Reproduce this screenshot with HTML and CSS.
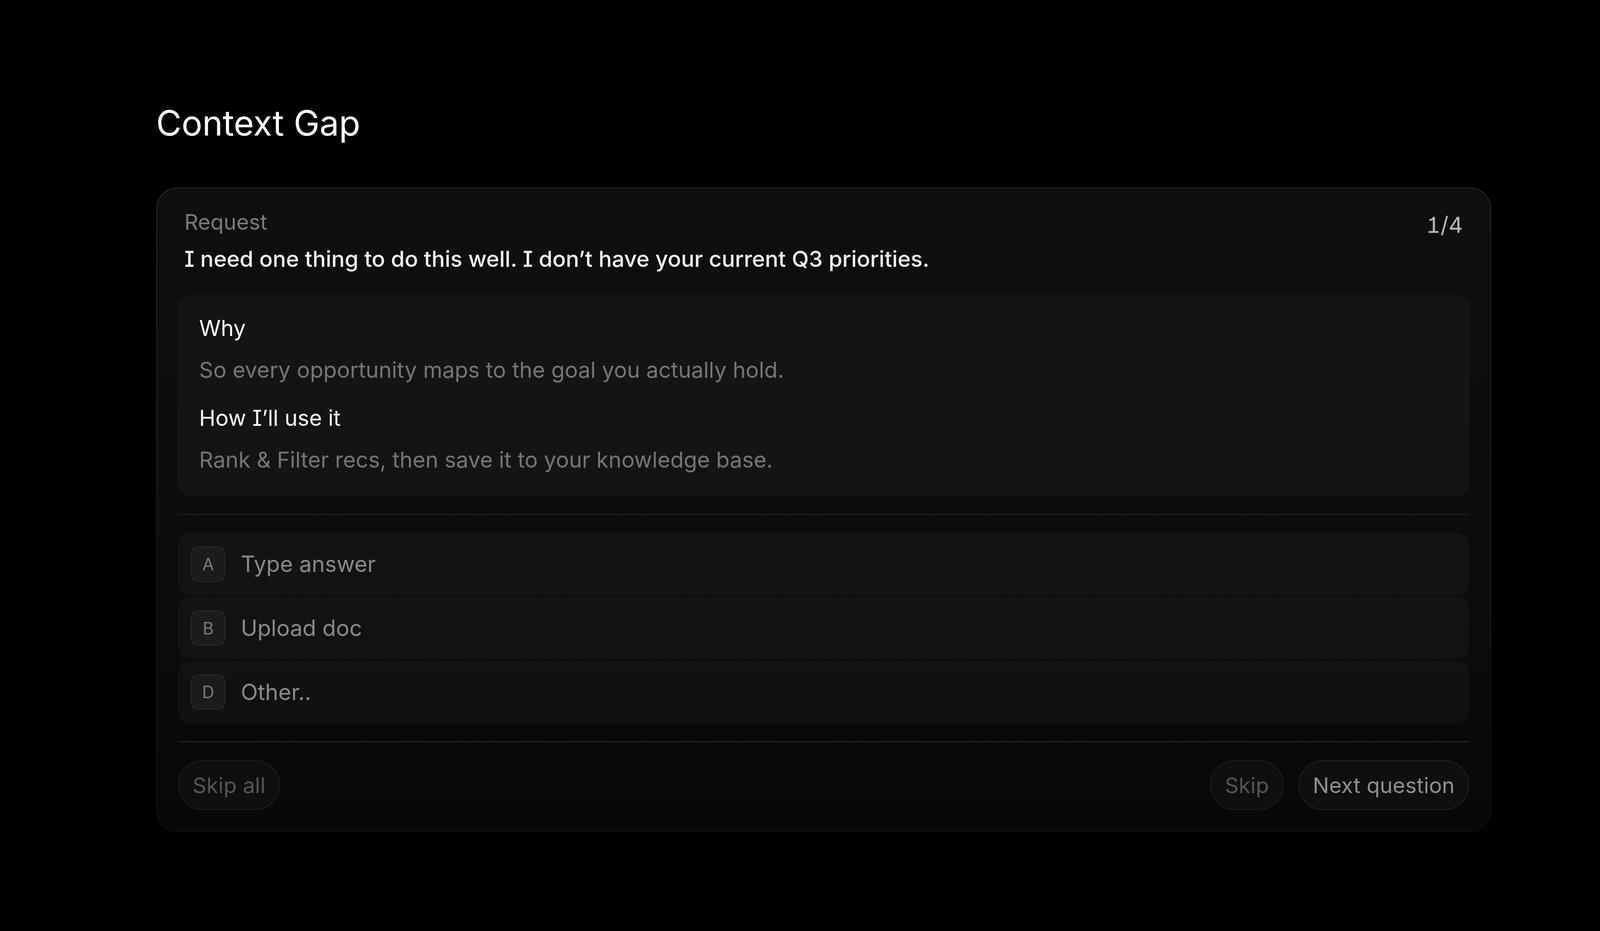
FILE: index.html
```html
<!DOCTYPE html>
<html lang="en">
<head>
<meta charset="utf-8">
<title>Context Gap</title>
<link rel="stylesheet" href="styles.css">
</head>
<body>
<div class="page">
  <h1 class="title">Context Gap</h1>
  <section class="card">
    <header class="head">
      <div class="head-text">
        <div class="label">Request</div>
        <p class="question">I need one thing to do this well. I don’t have your current Q3 priorities.</p>
      </div>
      <div class="count">1/4</div>
    </header>
    <div class="info">
      <div class="info-title">Why</div>
      <div class="info-desc">So every opportunity maps to the goal you actually hold.</div>
      <div class="info-title info-title-next">How I’ll use it</div>
      <div class="info-desc">Rank &amp; Filter recs, then save it to your knowledge base.</div>
    </div>
    <div class="divider"></div>
    <div class="options">
      <div class="option"><span class="key">A</span><span class="opt-text">Type answer</span></div>
      <div class="option"><span class="key">B</span><span class="opt-text">Upload doc</span></div>
      <div class="option"><span class="key">D</span><span class="opt-text">Other..</span></div>
    </div>
    <div class="divider"></div>
    <footer class="actions">
      <button class="btn btn-dim">Skip all</button>
      <div class="actions-right">
        <button class="btn btn-dim">Skip</button>
        <button class="btn btn-next">Next question</button>
      </div>
    </footer>
  </section>
</div>
</body>
</html>
```

FILE: styles.css
```css
html, body {
  margin: 0;
  padding: 0;
  background: #000;
}

body {
  font-family: Inter, "Noto Sans", "Liberation Sans", sans-serif;
  font-feature-settings: "cv08";
  color: #fff;
}

.page {
  zoom: 2.7015;
  min-height: 882px;
  padding: 96px 0 0 148px;
  box-sizing: border-box;
}

.title {
  margin: 0;
  font-size: 33px;
  line-height: 42px;
  font-weight: 400;
  letter-spacing: -0.1px;
  color: #fff;
}

.card {
  margin-top: 39.5px;
  width: 1265px;
  box-sizing: border-box;
  padding: 20px;
  border: 1px solid transparent;
  border-radius: 20px;
  background:
    linear-gradient(180deg, #0f0f0f 0%, #0c0c0c 60%, #080808 100%) padding-box,
    linear-gradient(180deg, #2c2c2c 0%, #1c1c1c 60%, #121212 100%) border-box;
}

.head {
  display: flex;
  justify-content: space-between;
  align-items: flex-start;
  padding: 0 6px;
  margin-bottom: 20px;
}

.label {
  font-size: 20.4px;
  line-height: 24px;
  color: #7b7b7b;
}

.question {
  margin: 9px 0 0;
  font-size: 21px;
  line-height: 28px;
  font-weight: 500;
  color: #f4f4f4;
}

.count {
  margin-top: 1px;
  font-size: 21px;
  line-height: 28px;
  color: #b8b8b8;
  font-feature-settings: "tnum", "cv01";
}

.info {
  background: #141414;
  border-radius: 12px;
  padding: 18px 20px 20px;
}

.info-title {
  font-size: 20.8px;
  line-height: 28px;
  color: #fafafa;
}

.info-title-next {
  margin-top: 17.6px;
}

.info-desc {
  margin-top: 11.6px;
  font-size: 20.8px;
  line-height: 28px;
  color: #767676;
}

.divider {
  height: 1px;
  background: #242424;
  margin: 17px 0;
}

.options {
  display: flex;
  flex-direction: column;
  gap: 1.6px;
}

.option {
  height: 59px;
  display: flex;
  align-items: center;
  gap: 14.5px;
  padding: 0 12px;
  border-radius: 11px;
  background: rgba(255, 255, 255, 0.03);
}

.key {
  width: 33px;
  height: 33px;
  box-sizing: border-box;
  display: flex;
  align-items: center;
  justify-content: center;
  border: 1px solid #2a2a2a;
  border-radius: 7px;
  background: #1b1b1b;
  font-size: 16px;
  color: #7a7a7a;
}

.opt-text {
  font-size: 21.1px;
  color: #8a8a8a;
}

.actions {
  display: flex;
  justify-content: space-between;
  align-items: center;
}

.actions-right {
  display: flex;
  gap: 14px;
}

.btn {
  height: 47px;
  padding: 0 13px;
  border: 1px solid #222;
  border-radius: 24px;
  background: #0f0f0f;
  font-family: inherit;
  font-feature-settings: "cv08";
  font-size: 20.5px;
  color: #555;
  cursor: pointer;
}

.btn-next {
  color: #8f8f8f;
  border-color: #252525;
}
```
